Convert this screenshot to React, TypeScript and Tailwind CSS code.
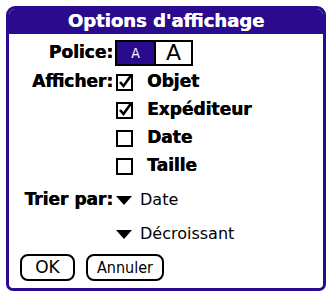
const PURPLE = "#2a0b8e";

function CheckBox({ checked }: { checked: boolean }) {
  return (
    <svg width="17" height="17" viewBox="0 0 17 17" className="shrink-0">
      <rect x="1" y="1" width="15" height="15" fill="white" stroke="black" strokeWidth="2" />
      {checked && (
        <polyline points="4,8 7.5,12 15,1.5" fill="none" stroke="black" strokeWidth="2.6" />
      )}
    </svg>
  );
}

function Triangle() {
  return (
    <svg width="16" height="9" viewBox="0 0 16 9" className="shrink-0">
      <polygon points="0,0 16,0 8,9" fill="black" />
    </svg>
  );
}

const options = [
  { label: "Objet", checked: true },
  { label: "Expéditeur", checked: true },
  { label: "Date", checked: false },
  { label: "Taille", checked: false },
];

export default function App() {
  return (
    <div
      className="w-[329px] h-[293px] bg-white pt-[6px] pl-[6px]"
      style={{ fontFamily: '"DejaVu Sans", Verdana, sans-serif' }}
    >
      <div className="w-[320px] h-[285px] border-[3px] border-[#2a0b8e] rounded-t-[9px] rounded-b-[7px] overflow-hidden flex flex-col">
        <div
          className="h-[25px] shrink-0 text-white text-center font-bold text-[18px] leading-[24px] [text-shadow:0.4px_0_0_white]"
          style={{ backgroundColor: PURPLE }}
        >
          Options d'affichage
        </div>

        <div className="flex flex-col pt-[6px]">
          {/* Police */}
          <div className="flex items-center h-[26px]">
            <div className="w-[104px] text-right font-bold text-[17px] text-black [text-shadow:0.5px_0_0_black]">Police:</div>
            <div className="ml-[2px] flex h-[26px] w-[78px] border-2 border-black">
              <div className="w-[37px] bg-[#2a0b8e] flex items-center justify-center text-white text-[14px] leading-none" style={{ fontFamily: '"DejaVu Sans Condensed", "DejaVu Sans", sans-serif' }}>
                A
              </div>
              <div className="w-[2px] bg-black" />
              <div className="flex-1 flex items-center justify-center text-black text-[22px] leading-none">A</div>
            </div>
          </div>

          {/* Afficher */}
          <div className="flex mt-[2px]">
            <div className="w-[104px] h-[28px] flex items-center justify-end font-bold text-[17px] text-black [text-shadow:0.5px_0_0_black]">
              Afficher:
            </div>
            <div className="ml-[3px] flex flex-col">
              {options.map((o) => (
                <div key={o.label} className="flex items-center h-[28px]">
                  <CheckBox checked={o.checked} />
                  <span className="ml-[14px] font-bold text-[17px] text-black [text-shadow:0.5px_0_0_black]">{o.label}</span>
                </div>
              ))}
            </div>
          </div>

          {/* Trier par */}
          <div className="flex items-center h-[28px] mt-[6px]">
            <div className="w-[104px] text-right font-bold text-[17px] text-black [text-shadow:0.5px_0_0_black]">Trier par:</div>
            <div className="ml-[3px] flex items-center">
              <Triangle />
              <span className="ml-[8px] text-[16px] text-black">Date</span>
            </div>
          </div>

          <div className="flex items-center h-[28px] mt-[6px] pl-[107px]">
            <Triangle />
            <span className="ml-[8px] text-[16px] text-black">Décroissant</span>
          </div>

          {/* Buttons */}
          <div className="flex gap-[11px] pl-[11px] mt-[6px]">
            <button className="w-[55px] h-[27px] border-2 border-black rounded-[8px] text-[17px] text-black leading-none bg-white">
              OK
            </button>
            <button
              className="w-[78px] h-[27px] border-2 border-black rounded-[8px] text-[16px] text-black leading-none bg-white"
              style={{ fontFamily: '"DejaVu Sans Condensed", "DejaVu Sans", sans-serif' }}
            >
              Annuler
            </button>
          </div>
        </div>
      </div>
    </div>
  );
}
